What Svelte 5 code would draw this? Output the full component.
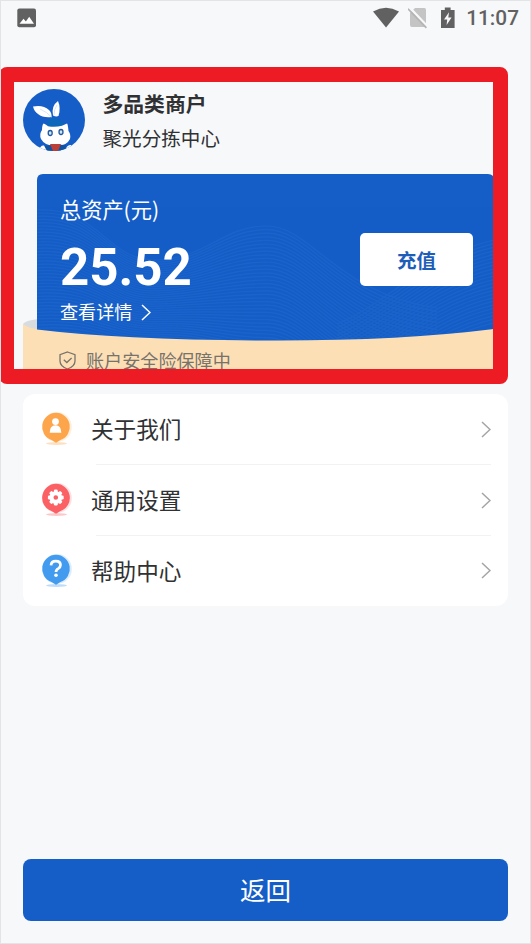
<script lang="ts">
	type MenuIcon = 'person' | 'gear' | 'question';

	const menu: { label: string; icon: MenuIcon; color: string }[] = [
		{ label: '关于我们', icon: 'person', color: '#fda54b' },
		{ label: '通用设置', icon: 'gear', color: '#fa6064' },
		{ label: '帮助中心', icon: 'question', color: '#439bf0' }
	];

	// Thin repeated contours behind the balance, one path per contour.
	const contours = [
		...Array.from({ length: 40 }, (_, i) => {
			const y = 36 + i * 3.2;
			const crest = 52 + i * 3.6;
			return `M0 ${y}C62 ${y - 4} 70 ${y + 52 - i} 120 ${y + 50 - i}S186 ${crest} 230 ${crest}S300 ${crest + 68} 400 ${crest + 82}`;
		}),
		...Array.from({ length: 24 }, (_, i) => {
			const y = 66 + i * 3.6;
			return `M300 ${y + 84}C352 ${y + 62} 388 ${y + 16} 457 ${y}`;
		})
	];

	const teeth = Array.from({ length: 8 }, (_, i) => i * 45);
</script>

<main class="screen">
	<header class="status-bar">
		<svg class="picture" width="20" height="20" viewBox="0 0 20 20">
			<rect x="0.3" y="0.5" width="18.7" height="18.7" rx="2" fill="#616161" />
			<path d="M2.5 15.8l4-5 2.4 2.6 3.3-4.6 4.8 7z" fill="#fff" />
		</svg>
		<div class="signals">
			<svg width="28" height="22" viewBox="0 0 28 22">
				<path d="M1 4.4Q14-2.8 27 4.4L14 20.4z" fill="#616161" />
			</svg>
			<svg width="20" height="22" viewBox="0 0 20 22">
				<path d="M7 1h9.5Q18 1 18 2.5V20H4Q2 20 2 18V6z" fill="#c4c4c4" />
				<path d="M1 0l19 20" stroke="#f7f8fa" stroke-width="2.5" />
				<path d="M0 1.8l18.4 19" stroke="#b4b4b4" stroke-width="1.7" />
			</svg>
			<svg width="16" height="22" viewBox="0 0 16 22">
				<path d="M1 3h3.8V.5h5.8V3h4v18H1z" fill="#616161" />
				<path d="M9 5.2L4 12.4h3.2L6.6 18 11.6 10.5H8.3z" fill="#f7f8fa" />
			</svg>
			<time>11:07</time>
		</div>
	</header>

	<section class="profile">
		<svg class="avatar" width="62" height="62" viewBox="0 0 62 62">
			<defs>
				<clipPath id="avatar-clip"><circle cx="31" cy="31" r="31" /></clipPath>
			</defs>
			<g clip-path="url(#avatar-clip)">
				<rect width="62" height="62" fill="#155ec8" />
				<path d="M10 17.5Q20 15.5 26 21Q29 24 28.5 28Q20 29 15 25Q11 22 10 17.5z" fill="#fff" />
				<path d="M35 12Q38 19 35.5 27Q33 28 30 26.5Q28 17 35 12z" fill="#fff" />
				<path d="M28.5 28Q24 23 17 20M31 26Q31 20 34 16" stroke="#d6e5f5" fill="none" />
				<path d="M24 36Q25 30 28 29.5Q36 28 42 36L40 39H25z" fill="#0b67b9" />
				<path
					d="M20.5 34.5Q21.5 34.5 25 37.2Q32 38.5 39 36.8L44 34.6Q44.8 35 45.5 42Q48 45 47 50Q44 56.5 34 57Q22 57.5 18 50Q16 45 19 41Q19 36 20.5 34.5z"
					fill="#fff"
				/>
				<path d="M22 57L31 55.5L43 56L42 63H21z" fill="#12539f" />
				<path d="M16 62Q17 56 21 56.5L24 62zM42 62Q44 55 48 56L52 62z" fill="#fff" />
				<path d="M27 55H38L35 62H30z" fill="#bc4038" />
				<g fill="#c5eaff" stroke="#24569c" stroke-width="1.3">
					<ellipse cx="27.2" cy="44" rx="2" ry="2.5" />
					<ellipse cx="38" cy="43" rx="2" ry="2.5" />
				</g>
			</g>
		</svg>
		<div>
			<h1>多品类商户</h1>
			<p>聚光分拣中心</p>
		</div>
	</section>

	<section class="wallet">
		<svg class="wallet-art" width="471" height="196" viewBox="-14 0 471 196">
			<defs>
				<clipPath id="wallet-clip">
					<path d="M0 6Q0 0 6 0H451Q457 0 457 6V155Q365 166.5 240 166.5Q90 166.5 0 155.5z" />
				</clipPath>
			</defs>
			<path d="M-14 150Q-12 146.5 1 145V160H-14z" fill="#d8dcdf" />
			<path d="M-14 150Q-10 154 0 155H457V196H-14z" fill="#fddfb6" />
			<g clip-path="url(#wallet-clip)">
				<rect width="457" height="167" fill="#155ec8" />
				<g class="contours">
					{#each contours as d}
						<path {d} />
					{/each}
				</g>
			</g>
		</svg>
		<div class="balance">
			<div>
				<p class="caption">总资产(元)</p>
				<strong>25.52</strong>
				<p class="details">
					查看详情
					<svg width="10" height="17" viewBox="0 0 10 17">
						<path d="M1 1l8 7.5L1 16" fill="none" stroke="currentColor" stroke-width="1.5" />
					</svg>
				</p>
			</div>
			<button class="top-up">充值</button>
		</div>
		<div class="insurance">
			<svg width="17" height="19" viewBox="0 0 17 19">
				<g fill="none" stroke="#77736b" stroke-width="1.3">
					<path d="M8.5 1L16 3.6V10Q16 15.2 8.5 18Q1 15.2 1 10V3.6z" />
					<path d="M4.8 8.8l3 2.7 4.8-4.5" />
				</g>
			</svg>
			<span>账户安全险保障中</span>
		</div>
	</section>

	<nav class="menu">
		{#each menu as item}
			<a href="#{item.icon}">
				<svg class="badge" width="34" height="36" viewBox="0 0 34 36">
					<ellipse cx="16.5" cy="32.5" rx="10.5" ry="1.4" fill={item.color} opacity="0.35" />
					<circle cx="17" cy="16" r="14.9" fill={item.color} opacity="0.18" />
					<path
						d="M16 1.8A14 14 0 0 1 20.5 29L16 31.8L11.5 29A14 14 0 0 1 16 1.8z"
						fill={item.color}
					/>
					{#if item.icon === 'person'}
						<circle cx="15.5" cy="10.6" r="3.4" fill="#fff" />
						<path d="M9.7 21.8Q9.7 14.3 15.5 14.3T21.3 21.8z" fill="#fff" />
					{:else if item.icon === 'gear'}
						<g fill="#fff">
							{#each teeth as angle}
								<rect
									x="13.9"
									y="7.6"
									width="3.8"
									height="5"
									rx="1.2"
									transform="rotate({angle} 15.8 15.5)"
								/>
							{/each}
						</g>
						<circle cx="15.8" cy="15.5" r="4.3" fill="none" stroke="#fff" stroke-width="4" />
					{:else}
						<path
							d="M11 12.3Q11.3 8.1 15.8 8.1Q20.5 8.1 20.5 12.1Q20.5 14.3 18.2 15.6Q16 16.7 16 19"
							fill="none"
							stroke="#fff"
							stroke-width="2.7"
						/>
						<circle cx="16" cy="22.3" r="1.8" fill="#fff" />
					{/if}
				</svg>
				<span>{item.label}</span>
				<svg class="chevron" width="10" height="17" viewBox="0 0 10 17">
					<path d="M1 1l8 7.5L1 16" fill="none" stroke="currentColor" stroke-width="1.5" />
				</svg>
			</a>
		{/each}
	</nav>

	<button class="back">返回</button>

	<!-- Highlight drawn over the account area -->
	<div class="highlight"></div>
</main>

<style>
	:global(body) {
		margin: 0;
	}

	.screen {
		position: relative;
		display: flex;
		flex-direction: column;
		box-sizing: border-box;
		width: 531px;
		height: 944px;
		padding: 0 22px 22px;
		overflow: hidden;
		border: 1px solid #e3e4e6;
		background: #f7f8fa;
		color: #303133;
		font-family: Roboto, 'Noto Sans CJK SC', sans-serif;
	}

	svg {
		display: block;
		flex: none;
	}

	h1,
	p {
		margin: 0;
	}

	button {
		padding: 0;
		border: 0;
		font-family: inherit;
	}

	.status-bar {
		display: flex;
		align-items: center;
		justify-content: space-between;
		height: 34px;
		margin: 0 -11px 0 -6px;
	}

	.signals {
		display: flex;
		align-items: center;
	}

	.signals svg:nth-child(2) {
		margin-left: 8px;
	}

	.signals svg:nth-child(3) {
		margin-left: 12px;
	}

	time {
		margin-left: 10px;
		color: #616161;
		font-size: 20.8px;
		font-weight: 500;
		line-height: 36px;
	}

	.profile {
		display: flex;
		gap: 17.5px;
		height: 85px;
		padding-top: 54px;
	}

	h1 {
		margin-top: 1px;
		font-size: 20.8px;
		font-weight: 700;
		line-height: 30px;
	}

	.profile p {
		margin-top: 5px;
		font-size: 19.6px;
		line-height: 30px;
	}

	.wallet {
		position: relative;
		height: 196px;
		margin-right: -7px;
	}

	.wallet-art {
		position: absolute;
		inset: 0;
	}

	.contours {
		fill: none;
		stroke: #3d86dc;
		stroke-width: 1.2;
		opacity: 0.16;
	}

	.balance {
		position: relative;
		display: flex;
		justify-content: space-between;
		padding: 20px 42px 0 37px;
		color: #fff;
	}

	.caption {
		font-family: 'Noto Sans CJK SC', sans-serif;
		font-size: 21.2px;
		line-height: 30px;
	}

	strong {
		display: block;
		margin-top: 14px;
		font-size: 51px;
		font-weight: 700;
		line-height: 60px;
	}

	.details {
		display: flex;
		align-items: center;
		gap: 9px;
		margin-top: 2px;
		font-size: 18.1px;
		line-height: 26px;
	}

	.details svg {
		margin-top: -2px;
	}

	.top-up {
		width: 113px;
		height: 53px;
		margin-top: 39px;
		border-radius: 5px;
		background: #fff;
		color: #1e5eb9;
		font-size: 19.5px;
		font-weight: 700;
	}

	.insurance {
		position: relative;
		display: flex;
		align-items: center;
		gap: 10px;
		margin: 22px 0 0 36px;
		color: #77736b;
		font-size: 18.1px;
		line-height: 28px;
	}

	.insurance svg {
		margin-top: -3px;
	}

	.menu {
		flex: none;
		margin-top: 24px;
		border-radius: 12px;
		background: #fff;
	}

	.menu a {
		position: relative;
		display: flex;
		align-items: center;
		height: 70.8px;
		padding: 0 17px;
		color: #303133;
		font-size: 22.6px;
		text-decoration: none;
	}

	.menu a + a::before {
		position: absolute;
		top: -1px;
		right: 17px;
		left: 73px;
		height: 1px;
		background: #f1f2f3;
		content: '';
	}

	.menu span {
		flex: 1;
		margin: -1px 0 0 17px;
	}

	.chevron {
		color: #a4a4a4;
	}

	.back {
		flex: none;
		height: 62px;
		margin-top: auto;
		padding-bottom: 3px;
		border-radius: 8px;
		background: #155ec8;
		color: #fff;
		font-size: 25.5px;
	}

	.highlight {
		position: absolute;
		top: 66px;
		left: -2px;
		box-sizing: border-box;
		width: 509px;
		height: 317px;
		border: 15px solid #ed1c24;
		border-radius: 8px;
	}
</style>
